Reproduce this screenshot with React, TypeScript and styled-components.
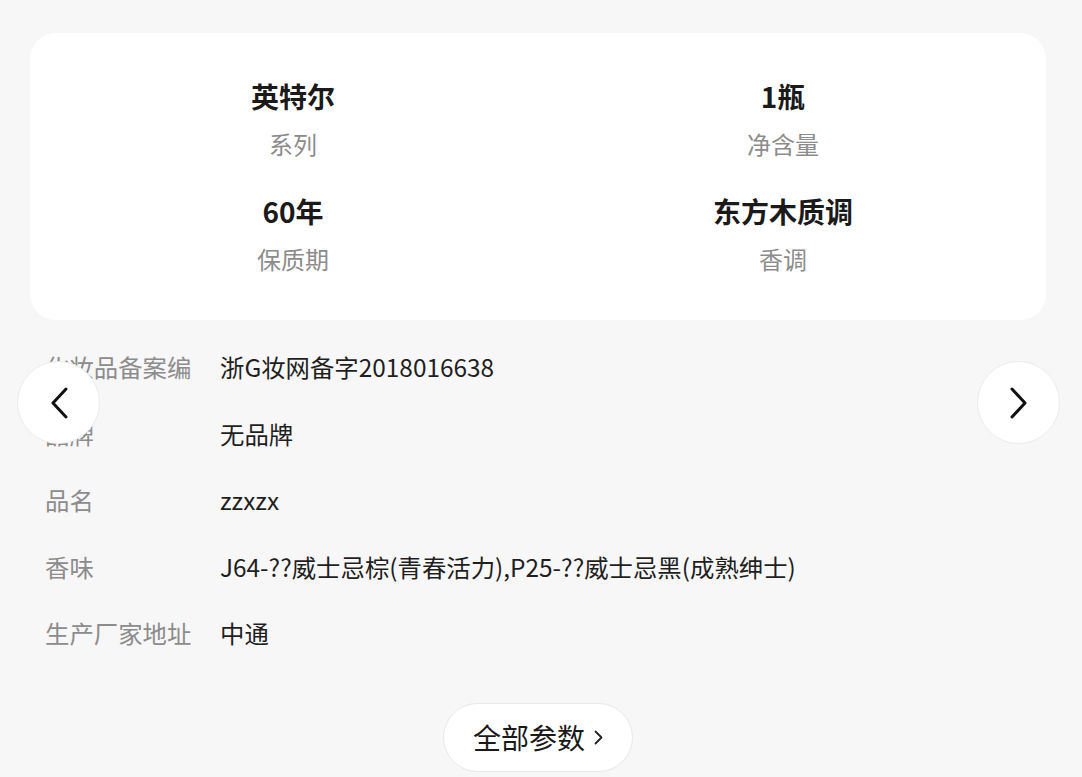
import React from 'react';
import styled, { createGlobalStyle } from 'styled-components';

const GlobalStyle = createGlobalStyle`
  html, body {
    margin: 0;
    padding: 0;
    background: #f7f7f7;
    font-family: "Noto Sans CJK SC", "Noto Sans", sans-serif;
  }
`;

const Page = styled.div`
  position: relative;
  width: 1082px;
  height: 777px;
  overflow: hidden;
  padding: 33px 36px 0 30px;
  box-sizing: border-box;
`;

const Card = styled.div`
  background: #fff;
  border-radius: 26px;
  padding: 43px 18px 44px;
  display: grid;
  grid-template-columns: 1fr 1fr;
  row-gap: 30px;
`;

const Spec = styled.div`
  display: flex;
  flex-direction: column;
  align-items: center;
  gap: 11px;
`;

const SpecValue = styled.div`
  font-size: 28px;
  font-weight: 700;
  line-height: 40px;
  color: #1a1a1a;
`;

const SpecLabel = styled.div`
  font-size: 24px;
  line-height: 34px;
  color: #8c8c8c;
`;

const Table = styled.div`
  margin-top: 14px;
  padding-left: 15px;
  display: flex;
  flex-direction: column;
`;

const Row = styled.div`
  display: flex;
  align-items: center;
  height: 66.5px;
  font-size: 24.4px;
  line-height: 34px;
`;

const Key = styled.div`
  width: 150px;
  height: 34px;
  margin-right: 25px;
  flex-shrink: 0;
  color: #8c8c8c;
  overflow: hidden;
  word-break: break-all;
`;

const Val = styled.div`
  color: #1f1f1f;
  white-space: nowrap;
`;

const Footer = styled.div`
  display: flex;
  justify-content: center;
  margin-top: 36px;
`;

const MoreButton = styled.button`
  display: flex;
  align-items: center;
  gap: 9px;
  height: 69px;
  padding: 0 29px 0 29px;
  border-radius: 35px;
  border: 1px solid #e8e8e8;
  background: #fff;
  font-family: inherit;
  font-size: 28px;
  color: #1a1a1a;
  cursor: pointer;
`;

const Arrow = styled.button<{ $side: 'left' | 'right' }>`
  position: absolute;
  top: 361px;
  ${(p) => (p.$side === 'left' ? 'left: 17px;' : 'right: 22px;')}
  width: 83px;
  height: 83px;
  border-radius: 50%;
  border: 1px solid #ececec;
  background: #fff;
  display: flex;
  align-items: center;
  justify-content: center;
  padding: 0;
  cursor: pointer;
`;

const specs = [
  { value: '英特尔', label: '系列' },
  { value: '1瓶', label: '净含量' },
  { value: '60年', label: '保质期' },
  { value: '东方木质调', label: '香调' },
];

const rows = [
  { key: '化妆品备案编号', val: '浙G妆网备字2018016638' },
  { key: '品牌', val: '无品牌' },
  { key: '品名', val: 'zzxzx' },
  { key: '香味', val: 'J64-??威士忌棕(青春活力),P25-??威士忌黑(成熟绅士)' },
  { key: '生产厂家地址', val: '中通' },
];

const Chevron = ({ dir }: { dir: 'left' | 'right' }) => (
  <svg width="18" height="32" viewBox="0 0 18 32" fill="none">
    <polyline
      points={dir === 'left' ? '16,2 3,16 16,30' : '2,2 15,16 2,30'}
      stroke="#111"
      strokeWidth="3"
      strokeLinecap="round"
      strokeLinejoin="round"
    />
  </svg>
);

const App = () => (
  <>
    <GlobalStyle />
    <Page>
      <Card>
        {specs.map((s) => (
          <Spec key={s.label}>
            <SpecValue>{s.value}</SpecValue>
            <SpecLabel>{s.label}</SpecLabel>
          </Spec>
        ))}
      </Card>
      <Table>
        {rows.map((r) => (
          <Row key={r.key}>
            <Key>{r.key}</Key>
            <Val>{r.val}</Val>
          </Row>
        ))}
      </Table>
      <Footer>
        <MoreButton>
          全部参数
          <svg width="9" height="15" viewBox="0 0 9 15" fill="none">
            <polyline points="1.5,1.5 7.5,7.5 1.5,13.5" stroke="#222" strokeWidth="1.8" strokeLinecap="round" strokeLinejoin="round" />
          </svg>
        </MoreButton>
      </Footer>
      <Arrow $side="left">
        <Chevron dir="left" />
      </Arrow>
      <Arrow $side="right">
        <Chevron dir="right" />
      </Arrow>
    </Page>
  </>
);

export default App;
